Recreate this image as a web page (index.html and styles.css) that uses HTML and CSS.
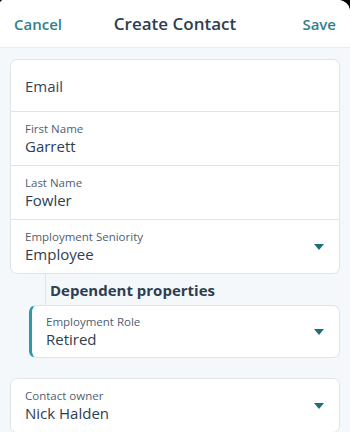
FILE: index.html
```html
<!DOCTYPE html>
<html>
<head>
<meta charset="utf-8">
<link rel="stylesheet" href="styles.css">
</head>
<body>
<div class="sheet">
  <header class="topbar">
    <span class="action">Cancel</span>
    <span class="title">Create Contact</span>
    <span class="action action-right">Save</span>
  </header>
  <main class="content">
    <section class="card">
      <div class="row row-empty"><span class="placeholder">Email</span></div>
      <div class="row"><div class="field"><span class="label">First Name</span><span class="value">Garrett</span></div></div>
      <div class="row"><div class="field"><span class="label">Last Name</span><span class="value">Fowler</span></div></div>
      <div class="row"><div class="field"><span class="label">Employment Seniority</span><span class="value">Employee</span></div><span class="caret"></span></div>
    </section>
    <div class="dependent">
      <div class="dep-head"><span class="dep-title">Dependent properties</span></div>
      <section class="card dep-card">
        <div class="row"><div class="field"><span class="label">Employment Role</span><span class="value">Retired</span></div><span class="caret"></span></div>
      </section>
    </div>
    <section class="card owner-card">
      <div class="row"><div class="field"><span class="label">Contact owner</span><span class="value">Nick Halden</span></div><span class="caret"></span></div>
    </section>
  </main>
</div>
</body>
</html>
```

FILE: styles.css
```css
html, body {
  margin: 0;
  padding: 0;
  background: #000;
  height: 100%;
  overflow: hidden;
}
.sheet {
  background: #f5f8fa;
  border-radius: 4px 12px 0 0;
  height: 432px;
  overflow: hidden;
  font-family: "Open Sans", "Lato", sans-serif;
  color: #33475b;
}
.topbar {
  background: #fff;
  height: 47px;
  border-bottom: 1px solid #e8ecf1;
  display: grid;
  grid-template-columns: 1fr auto 1fr;
  align-items: center;
  padding: 0 14px;
}
.action {
  color: #2f7f8b;
  font-size: 15px;
  font-weight: 600;
}
.action-right { justify-self: end; }
.title {
  font-size: 17px;
  font-weight: 600;
  color: #2d3e50;
}
.content {
  padding: 11px 10px 0 10px;
}
.card {
  background: #fff;
  border: 1px solid #dfe3eb;
  border-radius: 7px;
}
.row {
  display: flex;
  align-items: center;
  height: 53px;
  padding: 0 14px 0 14px;
  border-top: 1px solid #dfe3eb;
}
.row:first-child { border-top: none; }
.row-empty { height: 51px; }
.placeholder { font-size: 15px; }
.field {
  flex: 1;
  display: flex;
  flex-direction: column;
}
.label {
  font-size: 11.5px;
  line-height: 15px;
  color: #4f5e70;
}
.value {
  font-size: 15px;
  line-height: 20px;
  color: #2d3e50;
}
.caret {
  width: 0;
  height: 0;
  border-left: 5.5px solid transparent;
  border-right: 5.5px solid transparent;
  border-top: 6px solid #1f6f7a;
  margin-right: 1px;
}
.dependent {
  padding-left: 19px;
}
.dep-head {
  margin-left: 16px;
  border-left: 1px solid #dfe3eb;
  height: 31px;
  display: flex;
  align-items: center;
  padding-left: 4px;
}
.dep-title {
  font-size: 15px;
  font-weight: 700;
  color: #2d3e50;
}
.dep-card {
  border-left: 3px solid #2e9aa8;
}
.dep-card .row { height: 51px; padding-left: 14px; }
.owner-card {
  margin-top: 20px;
}
```
